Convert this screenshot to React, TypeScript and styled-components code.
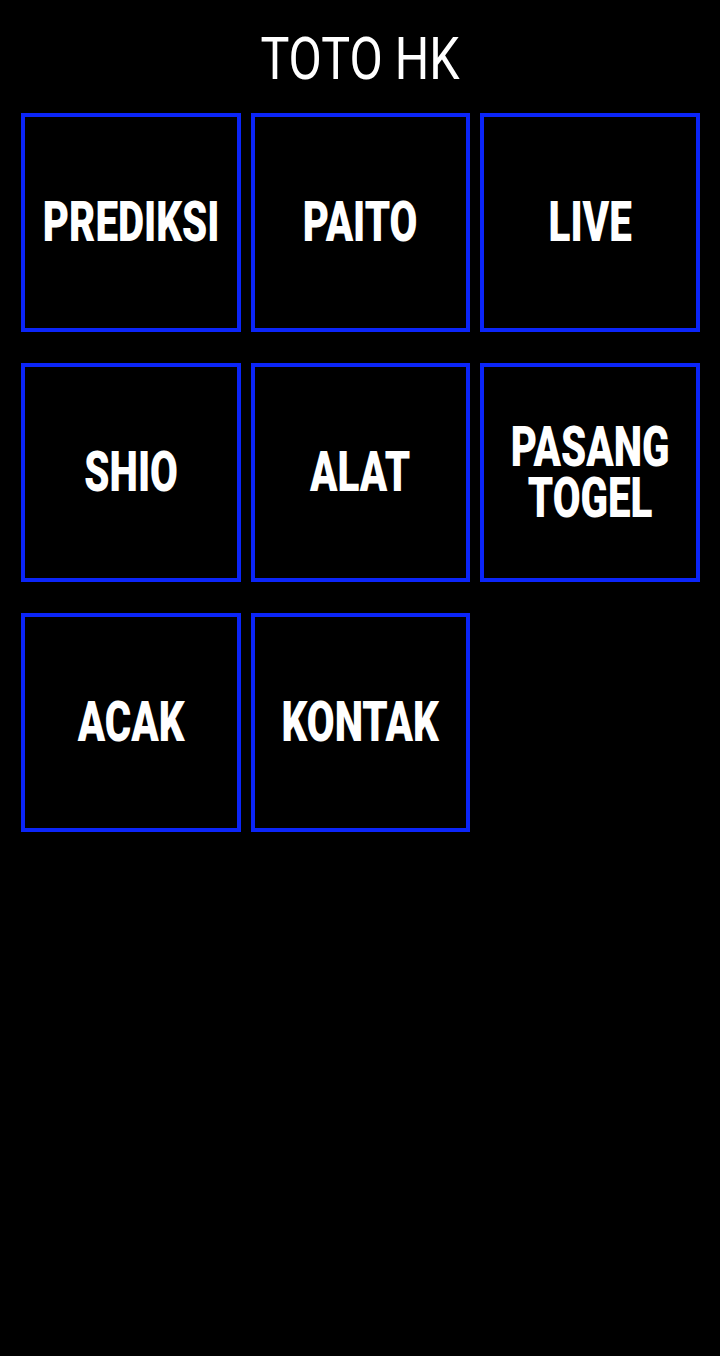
import React from 'react'
import styled, { createGlobalStyle } from 'styled-components'

const Global = createGlobalStyle`
  html, body {
    margin: 0;
    padding: 0;
    background: #000;
  }
  body {
    font-family: Roboto, "Noto Sans", sans-serif;
    color: #fff;
  }
`

const Page = styled.div`
  min-height: 1356px;
  background: #000;
  padding-top: 29px;
  box-sizing: border-box;
`

const Header = styled.h1`
  margin: 0 0 25px;
  font-size: 59px;
  line-height: 59px;
  font-weight: 400;
  text-align: center;
  transform: scaleX(0.82);
`

const Grid = styled.div`
  display: grid;
  grid-template-columns: repeat(3, 1fr);
  grid-auto-rows: 219px;
  column-gap: 10px;
  row-gap: 31px;
  padding: 0 20px 0 21px;
`

const Tile = styled.a`
  display: flex;
  align-items: center;
  justify-content: center;
  border: 4px solid #0b25f8;
  background: #000;
  color: #fff;
  text-decoration: none;
  overflow: hidden;
`

const Label = styled.span`
  flex: none;
  width: 140%;
  text-align: center;
  font-size: 56px;
  line-height: 51px;
  font-weight: 900;
  white-space: pre-line;
  transform: scaleX(0.72);
`

const menu = ['PREDIKSI', 'PAITO', 'LIVE', 'SHIO', 'ALAT', 'PASANG\nTOGEL', 'ACAK', 'KONTAK']

const App = () => {
  return (
    <>
      <Global />
      <Page>
        <Header>TOTO HK</Header>
        <Grid>
          {menu.map((item) => (
            <Tile key={item} href="#">
              <Label>{item}</Label>
            </Tile>
          ))}
        </Grid>
      </Page>
    </>
  )
}

export default App
